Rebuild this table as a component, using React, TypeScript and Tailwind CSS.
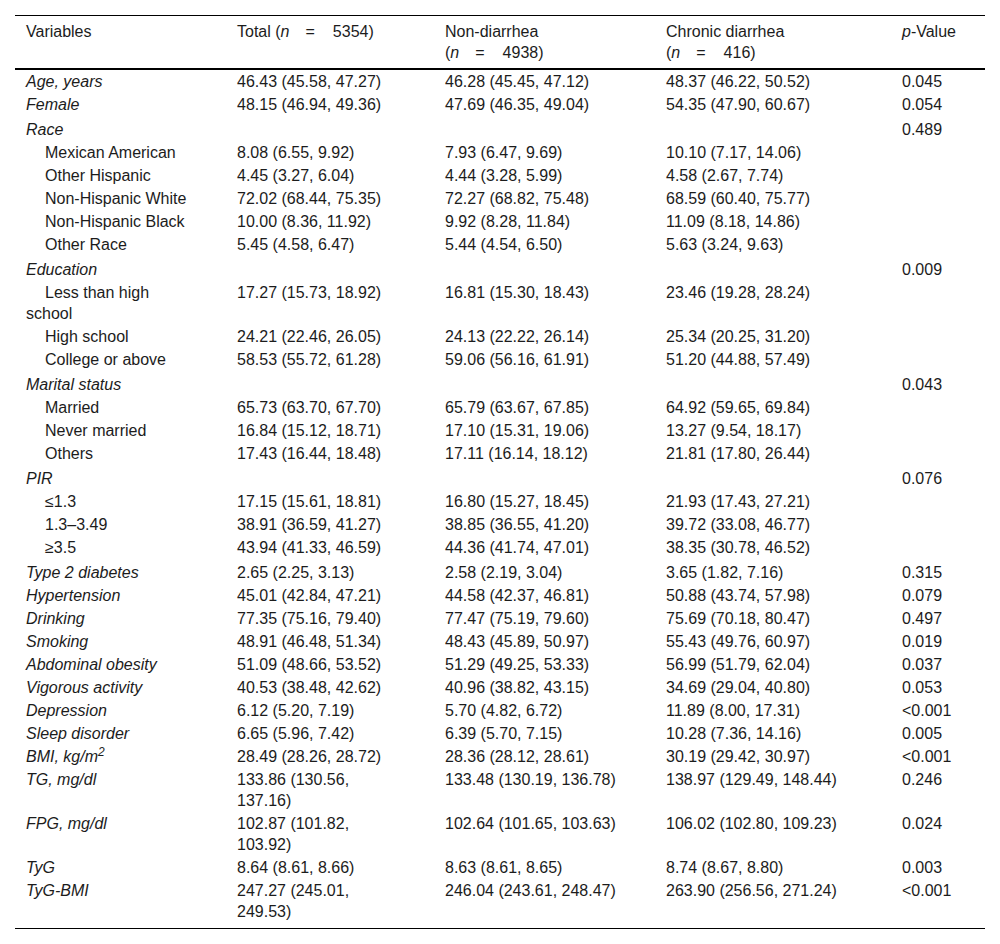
type Row = {
  label: string;
  kind: 'main' | 'sub' | 'group';
  total?: string;
  non?: string;
  chronic?: string;
  p?: string;
  gap?: boolean;
  sup?: string;
};

const rows: Row[] = [
  { label: 'Age, years', kind: 'main', total: '46.43 (45.58, 47.27)', non: '46.28 (45.45, 47.12)', chronic: '48.37 (46.22, 50.52)', p: '0.045' },
  { label: 'Female', kind: 'main', total: '48.15 (46.94, 49.36)', non: '47.69 (46.35, 49.04)', chronic: '54.35 (47.90, 60.67)', p: '0.054' },
  { label: 'Race', kind: 'group', p: '0.489', gap: true },
  { label: 'Mexican American', kind: 'sub', total: '8.08 (6.55, 9.92)', non: '7.93 (6.47, 9.69)', chronic: '10.10 (7.17, 14.06)' },
  { label: 'Other Hispanic', kind: 'sub', total: '4.45 (3.27, 6.04)', non: '4.44 (3.28, 5.99)', chronic: '4.58 (2.67, 7.74)' },
  { label: 'Non-Hispanic White', kind: 'sub', total: '72.02 (68.44, 75.35)', non: '72.27 (68.82, 75.48)', chronic: '68.59 (60.40, 75.77)' },
  { label: 'Non-Hispanic Black', kind: 'sub', total: '10.00 (8.36, 11.92)', non: '9.92 (8.28, 11.84)', chronic: '11.09 (8.18, 14.86)' },
  { label: 'Other Race', kind: 'sub', total: '5.45 (4.58, 6.47)', non: '5.44 (4.54, 6.50)', chronic: '5.63 (3.24, 9.63)' },
  { label: 'Education', kind: 'group', p: '0.009', gap: true },
  { label: 'Less than high school', kind: 'sub', total: '17.27 (15.73, 18.92)', non: '16.81 (15.30, 18.43)', chronic: '23.46 (19.28, 28.24)' },
  { label: 'High school', kind: 'sub', total: '24.21 (22.46, 26.05)', non: '24.13 (22.22, 26.14)', chronic: '25.34 (20.25, 31.20)' },
  { label: 'College or above', kind: 'sub', total: '58.53 (55.72, 61.28)', non: '59.06 (56.16, 61.91)', chronic: '51.20 (44.88, 57.49)' },
  { label: 'Marital status', kind: 'group', p: '0.043', gap: true },
  { label: 'Married', kind: 'sub', total: '65.73 (63.70, 67.70)', non: '65.79 (63.67, 67.85)', chronic: '64.92 (59.65, 69.84)' },
  { label: 'Never married', kind: 'sub', total: '16.84 (15.12, 18.71)', non: '17.10 (15.31, 19.06)', chronic: '13.27 (9.54, 18.17)' },
  { label: 'Others', kind: 'sub', total: '17.43 (16.44, 18.48)', non: '17.11 (16.14, 18.12)', chronic: '21.81 (17.80, 26.44)' },
  { label: 'PIR', kind: 'group', p: '0.076', gap: true },
  { label: '≤1.3', kind: 'sub', total: '17.15 (15.61, 18.81)', non: '16.80 (15.27, 18.45)', chronic: '21.93 (17.43, 27.21)' },
  { label: '1.3–3.49', kind: 'sub', total: '38.91 (36.59, 41.27)', non: '38.85 (36.55, 41.20)', chronic: '39.72 (33.08, 46.77)' },
  { label: '≥3.5', kind: 'sub', total: '43.94 (41.33, 46.59)', non: '44.36 (41.74, 47.01)', chronic: '38.35 (30.78, 46.52)' },
  { label: 'Type 2 diabetes', kind: 'main', total: '2.65 (2.25, 3.13)', non: '2.58 (2.19, 3.04)', chronic: '3.65 (1.82, 7.16)', p: '0.315', gap: true },
  { label: 'Hypertension', kind: 'main', total: '45.01 (42.84, 47.21)', non: '44.58 (42.37, 46.81)', chronic: '50.88 (43.74, 57.98)', p: '0.079' },
  { label: 'Drinking', kind: 'main', total: '77.35 (75.16, 79.40)', non: '77.47 (75.19, 79.60)', chronic: '75.69 (70.18, 80.47)', p: '0.497' },
  { label: 'Smoking', kind: 'main', total: '48.91 (46.48, 51.34)', non: '48.43 (45.89, 50.97)', chronic: '55.43 (49.76, 60.97)', p: '0.019' },
  { label: 'Abdominal obesity', kind: 'main', total: '51.09 (48.66, 53.52)', non: '51.29 (49.25, 53.33)', chronic: '56.99 (51.79, 62.04)', p: '0.037' },
  { label: 'Vigorous activity', kind: 'main', total: '40.53 (38.48, 42.62)', non: '40.96 (38.82, 43.15)', chronic: '34.69 (29.04, 40.80)', p: '0.053' },
  { label: 'Depression', kind: 'main', total: '6.12 (5.20, 7.19)', non: '5.70 (4.82, 6.72)', chronic: '11.89 (8.00, 17.31)', p: '<0.001' },
  { label: 'Sleep disorder', kind: 'main', total: '6.65 (5.96, 7.42)', non: '6.39 (5.70, 7.15)', chronic: '10.28 (7.36, 14.16)', p: '0.005' },
  { label: 'BMI, kg/m', sup: '2', kind: 'main', total: '28.49 (28.26, 28.72)', non: '28.36 (28.12, 28.61)', chronic: '30.19 (29.42, 30.97)', p: '<0.001' },
  { label: 'TG, mg/dl', kind: 'main', total: '133.86 (130.56, 137.16)', non: '133.48 (130.19, 136.78)', chronic: '138.97 (129.49, 148.44)', p: '0.246' },
  { label: 'FPG, mg/dl', kind: 'main', total: '102.87 (101.82, 103.92)', non: '102.64 (101.65, 103.63)', chronic: '106.02 (102.80, 109.23)', p: '0.024' },
  { label: 'TyG', kind: 'main', total: '8.64 (8.61, 8.66)', non: '8.63 (8.61, 8.65)', chronic: '8.74 (8.67, 8.80)', p: '0.003' },
  { label: 'TyG-BMI', kind: 'main', total: '247.27 (245.01, 249.53)', non: '246.04 (243.61, 248.47)', chronic: '263.90 (256.56, 271.24)', p: '<0.001' },
];

function Eq({ n }: { n: string }) {
  return (
    <span className="whitespace-nowrap">
      (<i>n</i>
      <span className="inline-block w-[16px]" />=
      <span className="inline-block w-[18px]" />
      {n})
    </span>
  );
}

export default function App() {
  return (
    <div
      className="bg-white p-[15px] text-[16px] text-[#1c1c1c]"
      style={{ fontFamily: '"Liberation Sans", Arial, sans-serif' }}
    >
      <div className="w-[970px] border-t border-b border-black">
        <table className="w-[970px] table-fixed border-separate border-spacing-0">
          <colgroup>
            <col className="w-[211px]" />
            <col className="w-[208px]" />
            <col className="w-[221px]" />
            <col className="w-[236px]" />
            <col className="w-[94px]" />
          </colgroup>
          <thead>
            <tr className="text-left align-top leading-[21px]">
              <th className="border-b-2 border-black pl-[11px] pr-[36px] pt-[5px] pb-[5px] font-normal">Variables</th>
              <th className="border-b-2 border-black pl-[11px] pr-[20px] pt-[5px] pb-[5px] font-normal whitespace-nowrap">
                Total <Eq n="5354" />
              </th>
              <th className="border-b-2 border-black pl-[11px] pr-[36px] pt-[5px] pb-[5px] font-normal">
                Non-diarrhea
                <br />
                <Eq n="4938" />
              </th>
              <th className="border-b-2 border-black pl-[11px] pr-[36px] pt-[5px] pb-[5px] font-normal">
                Chronic diarrhea
                <br />
                <Eq n="416" />
              </th>
              <th className="border-b-2 border-black pl-[11px] pr-[8px] pt-[5px] pb-[5px] font-normal">
                <i>p</i>-Value
              </th>
            </tr>
          </thead>
          <tbody>
            {rows.map((r, i) => {
              const last = i === rows.length - 1;
              const pad = `${r.gap ? 'pt-[3px]' : 'pt-[1px]'} ${last ? 'pb-[6px]' : 'pb-[1px]'}`;
              const cell = `align-top leading-[21px] pl-[11px] ${pad}`;
              return (
                <tr key={r.label}>
                  <td className={`${cell} pr-[36px]`}>
                    {r.kind === 'sub' ? (
                      <>
                        <span className="inline-block w-[19px]" />
                        {r.label}
                      </>
                    ) : (
                      <i>
                        {r.label}
                        {r.sup && <sup>{r.sup}</sup>}
                      </i>
                    )}
                  </td>
                  <td className={`${cell} pr-[36px]`}>{r.total}</td>
                  <td className={`${cell} pr-[36px]`}>{r.non}</td>
                  <td className={`${cell} pr-[36px]`}>{r.chronic}</td>
                  <td className={`${cell} pr-[8px] whitespace-nowrap`}>{r.p}</td>
                </tr>
              );
            })}
          </tbody>
        </table>
      </div>
    </div>
  );
}
